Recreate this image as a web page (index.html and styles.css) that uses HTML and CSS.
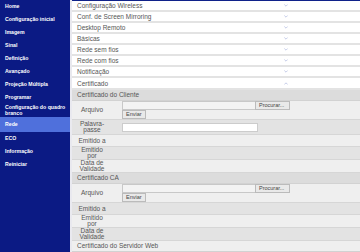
FILE: index.html
```html
<!DOCTYPE html>
<html lang="pt">
<head>
  <meta charset="UTF-8" />
  <title>Rede — Certificado</title>
  <meta name="viewport" content="width=device-width, initial-scale=1.0" />
  <link rel="stylesheet" href="styles.css">
</head>
<body>

  <div class="layout">

    <!-- menu lateral -->
    <nav class="side">
      <a class="side-item">Home</a>
      <a class="side-item">Configuração inicial</a>
      <a class="side-item">Imagem</a>
      <a class="side-item">Sinal</a>
      <a class="side-item">Definição</a>
      <a class="side-item">Avançado</a>
      <a class="side-item">Projeção Múltipla</a>
      <a class="side-item">Programar</a>
      <a class="side-item two">Configuração do quadro branco</a>
      <a class="side-item active">Rede</a>
      <a class="side-item">ECO</a>
      <a class="side-item">Informação</a>
      <a class="side-item">Reiniciar</a>
    </nav>

    <main class="main">
      <div class="acc"><span class="acc-title">Configuração Wireless</span><svg class="chev" viewBox="0 0 6 4"><polyline points="0.5,0.5 3,3 5.5,0.5" /></svg></div>
      <div class="acc"><span class="acc-title">Conf. de Screen Mirroring</span><svg class="chev" viewBox="0 0 6 4"><polyline points="0.5,0.5 3,3 5.5,0.5" /></svg></div>
      <div class="acc"><span class="acc-title">Desktop Remoto</span><svg class="chev" viewBox="0 0 6 4"><polyline points="0.5,0.5 3,3 5.5,0.5" /></svg></div>
      <div class="acc"><span class="acc-title">Básicas</span><svg class="chev" viewBox="0 0 6 4"><polyline points="0.5,0.5 3,3 5.5,0.5" /></svg></div>
      <div class="acc"><span class="acc-title">Rede sem fios</span><svg class="chev" viewBox="0 0 6 4"><polyline points="0.5,0.5 3,3 5.5,0.5" /></svg></div>
      <div class="acc"><span class="acc-title">Rede com fios</span><svg class="chev" viewBox="0 0 6 4"><polyline points="0.5,0.5 3,3 5.5,0.5" /></svg></div>
      <div class="acc"><span class="acc-title">Notificação</span><svg class="chev" viewBox="0 0 6 4"><polyline points="0.5,0.5 3,3 5.5,0.5" /></svg></div>
      <div class="acc open"><span class="acc-title">Certificado</span><svg class="chev" viewBox="0 0 6 4"><polyline points="0.5,3.5 3,1 5.5,3.5" /></svg></div>

      <!-- certificado do cliente -->
      <div class="cert-head">Certificado do Cliente</div>
      <div class="row tall">
        <div class="label">Arquivo</div>
        <div class="value">
          <div class="file"><span class="file-box"></span><span class="btn">Procurar...</span></div>
          <span class="btn">Enviar</span>
        </div>
      </div>
      <div class="row alt pass">
        <div class="label">Palavra-<br>passe</div>
        <div class="value"><span class="text-box"></span></div>
      </div>
      <div class="row">
        <div class="label">Emitido a</div>
        <div class="value"></div>
      </div>
      <div class="row alt">
        <div class="label">Emitido<br>por</div>
        <div class="value"></div>
      </div>
      <div class="row">
        <div class="label">Data de<br>Validade</div>
        <div class="value"></div>
      </div>

      <!-- certificado CA -->
      <div class="cert-head">Certificado CA</div>
      <div class="row tall">
        <div class="label">Arquivo</div>
        <div class="value">
          <div class="file"><span class="file-box"></span><span class="btn">Procurar...</span></div>
          <span class="btn">Enviar</span>
        </div>
      </div>
      <div class="row alt">
        <div class="label">Emitido a</div>
        <div class="value"></div>
      </div>
      <div class="row">
        <div class="label">Emitido<br>por</div>
        <div class="value"></div>
      </div>
      <div class="row alt">
        <div class="label">Data de<br>Validade</div>
        <div class="value"></div>
      </div>

      <div class="cert-head light">Certificado do Servidor Web</div>
    </main>

  </div>

</body>
</html>
```

FILE: styles.css
```css
body {
  margin: 0;
  font-family: 'Liberation Sans', Arial, sans-serif;
  background: #fff;
  color: #555;
}

.layout {
  display: flex;
  min-height: 100vh;
}

/* menu lateral */
.side {
  width: 70px;
  flex-shrink: 0;
  background: #0b1a84;
  border-right: 2px solid #e9e9ef;
  display: flex;
  flex-direction: column;
}

.side-item {
  display: flex;
  align-items: center;
  height: 13px;
  padding-left: 5px;
  color: #fff;
  font-size: 5.2px;
  font-weight: 700;
  line-height: 5.5px;
}

.side-item.active {
  background: #4f70dc;
  height: 15px;
}

/* conteúdo */
.main {
  flex: 1;
  border-top: 1px solid #10228a;
  font-size: 6.5px;
}

.acc {
  display: flex;
  align-items: center;
  height: 9px;
  padding-left: 5px;
  border-bottom: 2px solid #e3e3e3;
}

.acc-title {
  flex: 1;
}

.chev {
  width: 4px;
  height: 3px;
  margin-right: 72px;
  fill: none;
  stroke: #a9b3dd;
  stroke-width: 1;
}

.acc.open {
  height: 10px;
}

.cert-head {
  height: 10px;
  line-height: 10px;
  padding-left: 5px;
  background: #dcdcdc;
  border-bottom: 1px solid #d2d2d2;
}

.cert-head.light {
  background: #efefef;
}

.row {
  display: flex;
  background: #efefef;
  border-bottom: 1px solid #d6d6d6;
  min-height: 11px;
}

.row.alt {
  background: #e3e3e3;
}

.row.pass {
  min-height: 14px;
}

.label {
  width: 40px;
  flex-shrink: 0;
  display: flex;
  align-items: center;
  justify-content: center;
  text-align: center;
  line-height: 6px;
}

.value {
  flex: 1;
  padding-left: 10px;
  display: flex;
  flex-direction: column;
  align-items: flex-start;
}

.file {
  display: flex;
  align-items: flex-start;
}

.file-box {
  width: 132px;
  height: 7px;
  border: 1px solid #c8c8c8;
  border-right: none;
  background: #f3f3f3;
}

.btn {
  display: inline-block;
  height: 7px;
  line-height: 7px;
  padding: 0 3px;
  background: #e9e9e9;
  border: 1px solid #bbb;
  font-size: 5.5px;
  color: #444;
}

.file .btn {
  width: 27px;
}

.text-box {
  display: block;
  width: 134px;
  height: 7px;
  margin-top: 3px;
  background: #fff;
  border: 1px solid #ccc;
}
```
